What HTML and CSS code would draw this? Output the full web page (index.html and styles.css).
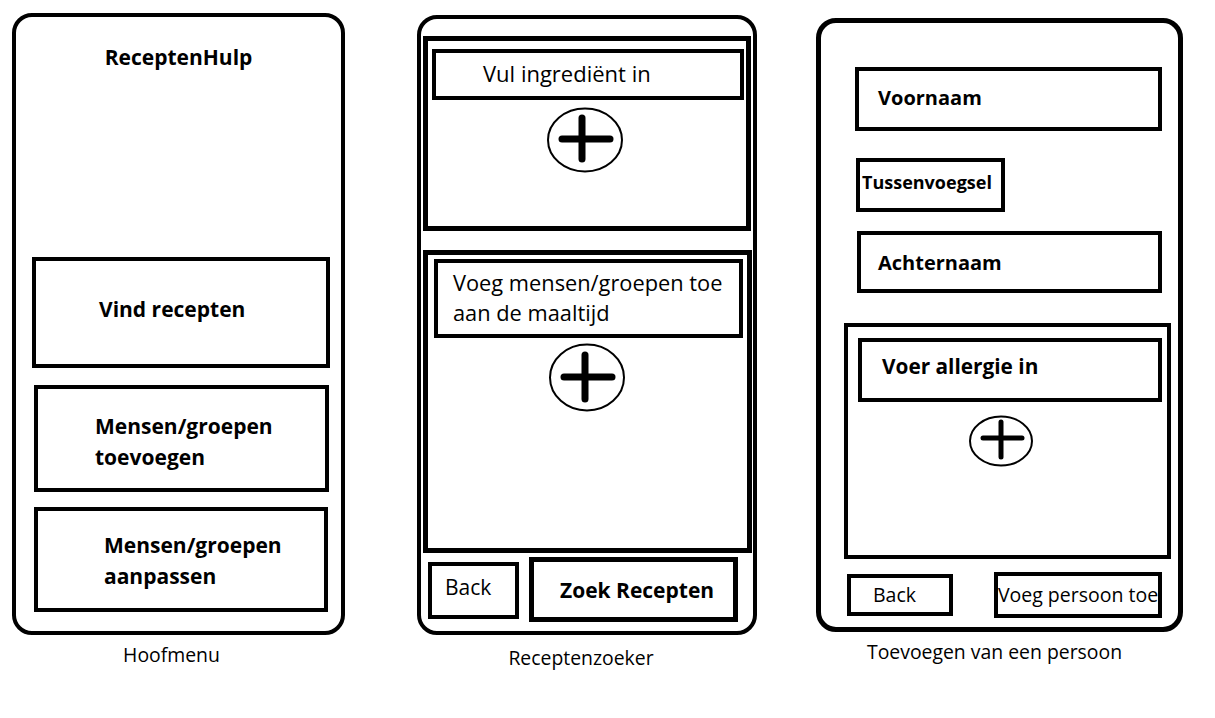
FILE: index.html
```html
<!DOCTYPE html>
<html lang="nl">
<head>
    <meta charset="UTF-8">
    <meta name="viewport" content="width=device-width, initial-scale=1.0">
    <title>ReceptenHulp wireframes</title>
    <link rel="stylesheet" href="styles.css">
</head>
<body>
    <div class="board">

        <!-- Hoofdmenu -->
        <section class="screen screen-menu">
            <div class="phone">
                <h1 class="app-title">ReceptenHulp</h1>
                <div class="menu-btn menu-find">Vind recepten</div>
                <div class="menu-btn menu-add">Mensen/groepen<br>toevoegen</div>
                <div class="menu-btn menu-edit">Mensen/groepen<br>aanpassen</div>
            </div>
            <p class="caption">Hoofmenu</p>
        </section>

        <!-- Receptenzoeker -->
        <section class="screen screen-search">
            <div class="phone">
                <div class="panel panel-ingredients">
                    <div class="field field-ingredient">Vul ingrediënt in</div>
                    <svg class="plus plus-big" viewBox="0 0 76 66" width="76" height="66">
                        <ellipse cx="38" cy="33" rx="37" ry="31.5" />
                        <line class="bar" x1="15" y1="32" x2="63" y2="32" />
                        <line class="bar" x1="35" y1="11" x2="35" y2="52" />
                    </svg>
                </div>
                <div class="panel panel-people">
                    <div class="field field-people">Voeg mensen/groepen toe<br>aan de maaltijd</div>
                    <svg class="plus plus-big" viewBox="0 0 76 69" width="76" height="69">
                        <ellipse cx="38" cy="34.5" rx="37" ry="33" />
                        <line class="bar" x1="15" y1="34" x2="63" y2="34" />
                        <line class="bar" x1="36" y1="12" x2="36" y2="56" />
                    </svg>
                </div>
                <div class="actions">
                    <div class="btn btn-back">Back</div>
                    <div class="btn btn-search">Zoek Recepten</div>
                </div>
            </div>
            <p class="caption">Receptenzoeker</p>
        </section>

        <!-- Persoon toevoegen -->
        <section class="screen screen-person">
            <div class="phone">
                <div class="field name-first">Voornaam</div>
                <div class="field name-middle">Tussenvoegsel</div>
                <div class="field name-last">Achternaam</div>
                <div class="panel panel-allergy">
                    <div class="field field-allergy">Voer allergie in</div>
                    <svg class="plus plus-small" viewBox="0 0 64 52" width="64" height="52">
                        <ellipse cx="32" cy="26" rx="31" ry="24.5" />
                        <line class="bar" x1="14" y1="23" x2="53" y2="23" />
                        <line class="bar" x1="32" y1="7" x2="32" y2="42" />
                    </svg>
                </div>
                <div class="actions">
                    <div class="btn btn-back">Back</div>
                    <div class="btn btn-save">Voeg persoon toe</div>
                </div>
            </div>
            <p class="caption">Toevoegen van een persoon</p>
        </section>

    </div>
</body>
</html>
```

FILE: styles.css
```css
:root {
    --ink: #000;
    --paper: #fff;
}

* {
    box-sizing: border-box;
}

body {
    margin: 0;
    background-color: var(--paper);
    color: var(--ink);
    font-family: "Open Sans", "Noto Sans", sans-serif;
}

.board {
    display: flex;
    align-items: flex-start;
}

.screen {
    display: flex;
    flex-direction: column;
}

.phone {
    display: flex;
    flex-direction: column;
    align-items: flex-start;
    border: 4px solid var(--ink);
    border-radius: 20px;
}

.phone > *,
.panel > * {
    flex-shrink: 0;
}

.caption {
    margin: 0;
    font-size: 19.4px;
    line-height: 24px;
    text-align: center;
}

.field,
.menu-btn,
.btn {
    display: flex;
    align-items: center;
    border: 4px solid var(--ink);
}

.panel {
    display: flex;
    flex-direction: column;
    align-items: flex-start;
    border: 5px solid var(--ink);
}

.plus ellipse {
    fill: none;
    stroke: var(--ink);
    stroke-width: 2;
}

.plus .bar {
    stroke: var(--ink);
    stroke-width: 7;
    stroke-linecap: round;
}

.plus-small .bar {
    stroke-width: 5;
}

/* Hoofdmenu */
.screen-menu {
    margin: 13px 0 0 12px;
}

.screen-menu .phone {
    width: 333px;
    height: 622px;
    padding-top: 27px;
}

.screen-menu .caption {
    margin-top: 8px;
    padding-right: 14px;
}

.app-title {
    align-self: center;
    margin: 0 0 187px 0;
    font-size: 21px;
    line-height: 26px;
    font-weight: 700;
}

.menu-btn {
    font-size: 21px;
    line-height: 31px;
    font-weight: 700;
}

.menu-find {
    width: 298px;
    height: 111px;
    margin-left: 16px;
    padding: 0 0 6px 63px;
}

.menu-add {
    width: 295px;
    height: 107px;
    margin: 17px 0 0 18px;
    padding: 6px 0 0 57px;
}

.menu-edit {
    width: 294px;
    height: 105px;
    margin: 15px 0 0 18px;
    padding: 2px 0 0 66px;
}

/* Receptenzoeker */
.screen-search {
    margin: 15px 0 0 72px;
}

.screen-search .phone {
    width: 340px;
    height: 620px;
    padding-top: 17px;
}

.screen-search .caption {
    margin-top: 11px;
    padding-right: 12px;
}

.panel-ingredients {
    width: 328px;
    height: 195px;
    margin-left: 2px;
}

.panel-people {
    width: 329px;
    height: 303px;
    margin: 19px 0 0 2px;
}

.field-ingredient {
    width: 312px;
    height: 51px;
    margin: 8px 0 0 4px;
    padding: 0 0 4px 47px;
    font-size: 22px;
}

.field-people {
    width: 309px;
    height: 79px;
    margin: 4px 0 0 6px;
    padding: 0 0 2px 15px;
    font-size: 21.8px;
    line-height: 30px;
}

.panel-ingredients .plus {
    margin: 7px 0 0 119px;
}

.panel-people .plus {
    margin: 5px 0 0 121px;
}

.actions {
    display: flex;
    align-items: flex-start;
}

.screen-search .actions {
    margin: 4px 0 0 7px;
    gap: 10px;
}

.btn {
    font-size: 21px;
}

.screen-search .btn-back {
    width: 91px;
    height: 57px;
    margin-top: 5px;
    padding: 0 0 8px 13px;
}

.btn-search {
    width: 209px;
    height: 65px;
    border-width: 5px;
    padding: 0 0 0 26px;
    font-weight: 700;
}

/* Persoon toevoegen */
.screen-person {
    margin: 18px 0 0 59px;
}

.screen-person .phone {
    width: 367px;
    height: 614px;
    border-width: 5px;
    padding-top: 44px;
}

.screen-person .caption {
    margin-top: 8px;
    padding-right: 10px;
}

.screen-person .field {
    font-weight: 700;
    font-size: 20px;
}

.name-first {
    width: 307px;
    height: 64px;
    margin-left: 34px;
    padding: 0 0 4px 19px;
}

.screen-person .name-middle {
    width: 149px;
    height: 54px;
    margin: 27px 0 0 35px;
    padding: 0 0 6px 2px;
    font-size: 18px;
}

.name-last {
    width: 305px;
    height: 62px;
    margin: 19px 0 0 36px;
    padding: 0 0 0 17px;
}

.panel-allergy {
    width: 327px;
    height: 236px;
    margin: 30px 0 0 23px;
    border-width: 4px;
}

.screen-person .field-allergy {
    width: 304px;
    height: 64px;
    margin: 11px 0 0 10px;
    padding: 0 0 8px 20px;
    font-size: 20.8px;
}

.panel-allergy .plus {
    margin: 13px 0 0 121px;
}

.screen-person .actions {
    margin: 13px 0 0 26px;
    gap: 41px;
}

.screen-person .btn-back {
    width: 106px;
    height: 42px;
    margin-top: 2px;
    padding: 0 0 2px 22px;
    font-size: 19.5px;
}

.btn-save {
    width: 168px;
    height: 46px;
    padding: 0 0 2px 0;
    justify-content: center;
    font-size: 19.5px;
    white-space: nowrap;
}
```
